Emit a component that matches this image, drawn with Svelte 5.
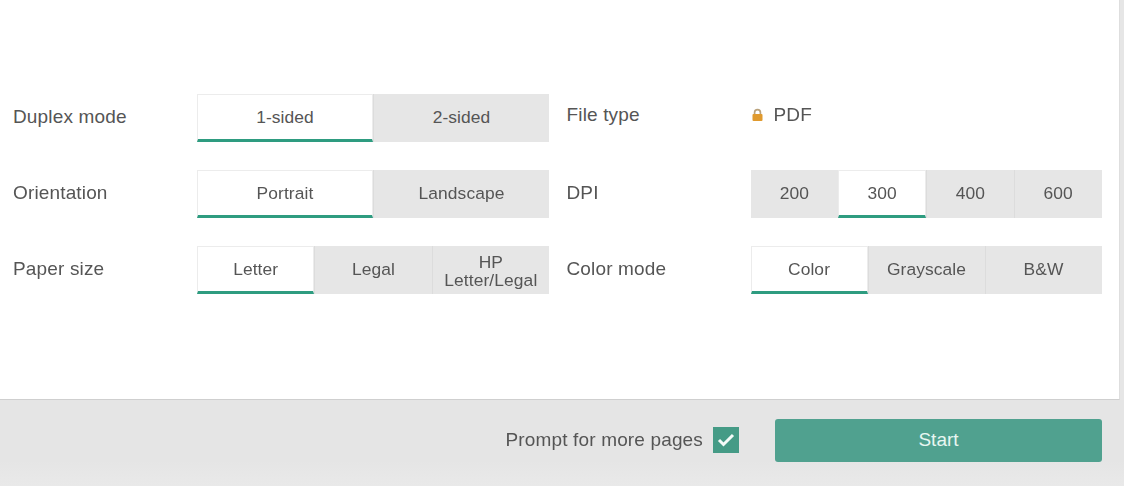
<script>
	const left = [
		{ label: 'Duplex mode', options: ['1-sided', '2-sided'], selected: 0 },
		{ label: 'Orientation', options: ['Portrait', 'Landscape'], selected: 0 },
		{ label: 'Paper size', options: ['Letter', 'Legal', 'HP Letter/Legal'], selected: 0 }
	];
	const right = [
		{ label: 'File type', locked: 'PDF' },
		{ label: 'DPI', options: ['200', '300', '400', '600'], selected: 1 },
		{ label: 'Color mode', options: ['Color', 'Grayscale', 'B&W'], selected: 0 }
	];
	const rows = left.flatMap((row, i) => [row, right[i]]);
</script>

<div class="page">
	<main class="card">
		<div class="form">
			{#each rows as row}
				<div class="field" class:static={row.locked}>
					<span class="label">{row.label}</span>
					{#if row.locked}
						<div class="locked">
							<svg width="13" height="14" viewBox="0 0 13 14" aria-hidden="true">
								<path d="M3.6 7V4.5a2.9 2.9 0 0 1 5.8 0V7" fill="none" stroke="#b9a27c" stroke-width="1.7" />
								<rect x="1.5" y="6" width="10" height="7" rx="1" fill="#e09a2e" />
							</svg>
							<span>{row.locked}</span>
						</div>
					{:else}
						<div class="segments">
							{#each row.options as option, i}
								<button class="segment" class:active={i === row.selected} class:wrap={option.includes(' ')}>{option}</button>
							{/each}
						</div>
					{/if}
				</div>
			{/each}
		</div>
	</main>
	<footer>
		<label class="prompt">
			<span>Prompt for more pages</span>
			<span class="check">
				<svg width="20" height="16" viewBox="0 0 20 16" aria-hidden="true">
					<path d="M3 8l4.5 4.5L17 3" fill="none" stroke="#f4fbf8" stroke-width="3" />
				</svg>
			</span>
		</label>
		<button class="start">Start</button>
	</footer>
</div>

<style>
	:global(body) {
		background: #e6e6e6;
	}

	.page {
		width: 1124px;
		height: 486px;
		overflow: hidden;
		display: flex;
		flex-direction: column;
		font-family: "Liberation Sans", Arial, sans-serif;
		font-size: 19px;
		letter-spacing: 0.15px;
		color: #555;
		filter: blur(0.6px);
	}

	.card {
		width: 1120px;
		height: 400px;
		box-sizing: border-box;
		padding: 94px 17px 0 13px;
		background: #fff;
		border-right: 1px solid #dedede;
		border-bottom: 1px solid #cfcfcf;
	}

	.form {
		display: grid;
		grid-template-columns: 536px 535px;
		row-gap: 28px;
		column-gap: 17.5px;
	}

	.field {
		display: grid;
		grid-template-columns: 184px 1fr;
		align-items: center;
		height: 48px;
	}

	.label {
		padding-bottom: 2px;
	}

	.static .label,
	.locked {
		padding-bottom: 6px;
	}

	.locked {
		display: flex;
		align-items: center;
		gap: 10px;
	}

	.segments {
		display: grid;
		grid-auto-flow: column;
		grid-auto-columns: 1fr;
		height: 48px;
		background: #e6e6e6;
	}

	.segment {
		min-width: 0;
		padding: 0 6px 2px;
		border: 0;
		border-left: 1px solid #dcdcdc;
		background: #e6e6e6;
		font: inherit;
		font-size: 17.4px;
		letter-spacing: 0.1px;
		line-height: 18px;
		color: #555;
	}

	.segment:first-child {
		border-left: 0;
	}

	.segment:first-child:not(.active) {
		border-bottom-left-radius: 3px;
	}

	.segment.wrap {
		padding: 1px 6px 0;
	}

	.segment.active {
		padding-bottom: 0;
		background: #fff;
		border: 1px solid #ececec;
		border-bottom: 3px solid #2e9c80;
	}

	footer {
		flex: 1;
		display: flex;
		justify-content: flex-end;
		align-items: center;
		gap: 36px;
		padding: 0 22px 6px 0;
		background: linear-gradient(#e5e5e5 70%, #e9e9e9);
	}

	.prompt {
		display: flex;
		align-items: center;
		gap: 10px;
	}

	.check {
		width: 26px;
		height: 26px;
		display: flex;
		align-items: center;
		justify-content: center;
		background: #459b86;
	}

	.start {
		width: 327px;
		height: 43px;
		border: 0;
		border-radius: 3px;
		background: #50a18f;
		color: #e8f6f1;
		font: inherit;
	}
</style>
